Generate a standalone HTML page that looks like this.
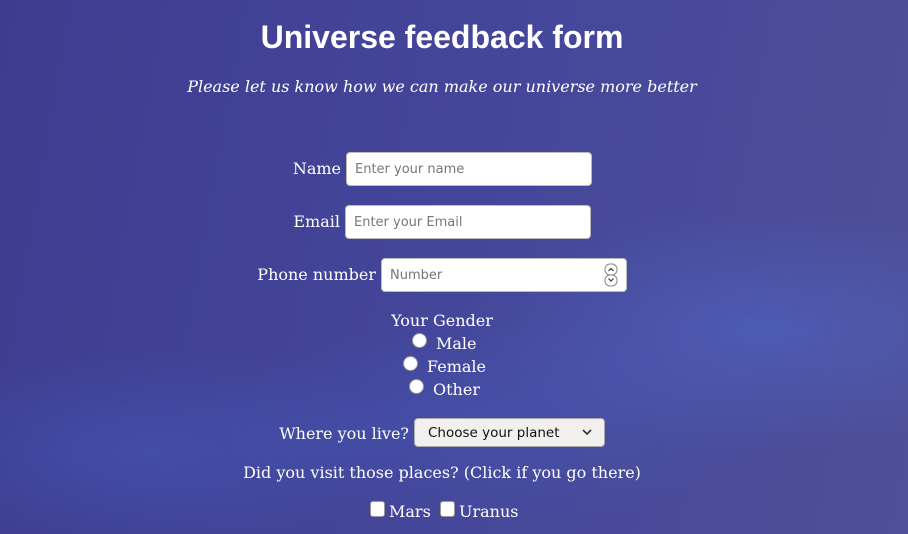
<!DOCTYPE html>
<html><head><meta charset="utf-8"><style>
html,body{margin:0;padding:0}
body{width:908px;height:534px;overflow:hidden;position:relative;
background:
radial-gradient(ellipse 300px 120px at 760px 330px,rgba(80,110,210,.45),transparent),
radial-gradient(ellipse 260px 100px at 150px 450px,rgba(70,100,200,.35),transparent),
radial-gradient(ellipse 300px 100px at 500px 420px,rgba(70,100,200,.3),transparent),
linear-gradient(100deg,#3d3d90 0%,#44469a 50%,#4e4f98 100%);
font-family:"DejaVu Serif","Liberation Serif",serif;color:#fff}
.a{position:absolute;white-space:nowrap}
h1{position:absolute;margin:0;left:0;width:884px;text-align:center;top:19px;font:bold 32px "Liberation Sans",sans-serif}
.sub{left:0;width:884px;text-align:center;top:77px;font-style:italic;font-size:16px}
.l{font-size:16px;text-align:right}
.in{position:absolute;background:#fff;border:1px solid #bbb;border-radius:4px;box-sizing:border-box;height:34px;
font:13px "DejaVu Sans",sans-serif;color:#777;padding:9px 8px;line-height:16px}
.c{left:0;width:884px;text-align:center;font-size:16px}
.r{position:absolute;width:15px;height:15px;border-radius:50%;background:#fff;border:1px solid #999;box-sizing:border-box}
.cb{position:absolute;width:15px;height:16px;border-radius:3px;background:#fff;border:1px solid #999;box-sizing:border-box}
</style></head><body>
<h1>Universe feedback form</h1>
<div class="a sub">Please let us know how we can make our universe more better</div>

<div class="a l" style="right:567px;top:159px">Name</div>
<div class="in" style="left:346px;top:152px;width:246px">Enter your name</div>
<div class="a l" style="right:568px;top:212px">Email</div>
<div class="in" style="left:345px;top:205px;width:246px">Enter your Email</div>
<div class="a l" style="right:532px;top:265px">Phone number</div>
<div class="in" style="left:381px;top:258px;width:246px">Number
<svg style="position:absolute;right:8px;top:4px" width="14" height="24" viewBox="0 0 14 24"><rect x="1" y="1" width="12" height="11" rx="5" fill="#fff" stroke="#888"/><rect x="1" y="12" width="12" height="11" rx="5" fill="#fff" stroke="#888"/><path d="M4.5 8 L7 5.5 L9.5 8 M4.5 15.5 L7 18 L9.5 15.5" fill="none" stroke="#333" stroke-width="1.2"/></svg></div>

<div class="a c" style="top:311px">Your Gender</div>
<div class="r" style="left:412px;top:333px"></div><div class="a" style="left:436px;top:334px;font-size:16px">Male</div>
<div class="r" style="left:403px;top:356px"></div><div class="a" style="left:427px;top:357px;font-size:16px">Female</div>
<div class="r" style="left:409px;top:379px"></div><div class="a" style="left:433px;top:380px;font-size:16px">Other</div>

<div class="a l" style="right:499px;top:424px">Where you live?</div>
<div class="in" style="left:414px;top:418px;width:191px;height:29px;background:#f1f0ee;color:#111;padding:6px 13px;border-color:#aaa;font-size:13.5px">Choose your planet
<svg style="position:absolute;right:12px;top:10px" width="10" height="7"><path d="M1 1 L5 5 L9 1" fill="none" stroke="#333" stroke-width="1.6"/></svg></div>

<div class="a c" style="top:463px">Did you visit those places? (Click if you go there)</div>
<div class="cb" style="left:370px;top:501px"></div><div class="a" style="left:389px;top:502px;font-size:16px">Mars</div>
<div class="cb" style="left:440px;top:501px"></div><div class="a" style="left:459px;top:502px;font-size:16px">Uranus</div>
</body></html>
